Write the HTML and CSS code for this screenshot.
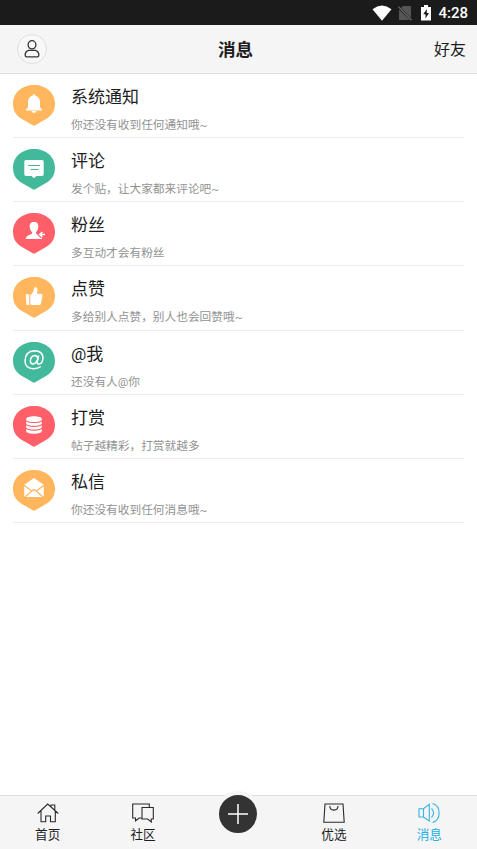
FILE: index.html
```html
<!DOCTYPE html>
<html lang="zh-CN">
<head>
<meta charset="utf-8">
<title>消息</title>
<link rel="stylesheet" href="styles.css">
</head>
<body>
<svg class="defs" width="0" height="0"><defs>
<path id="pin" d="M21 0C33 0 42 8 42 18.500C42 26 38.500 31 33 34L22.200 40.300Q21 41 19.800 40.300L9 34C3.500 31 0 26 0 18.500C0 8 9 0 21 0Z"/>
</defs></svg>
<div class="status">
  <svg width="20" height="16" viewBox="0 0 20 16"><path fill="#fff" d="M.5 4.200Q10-3.200 19.500 4.200L10 15.800Z"/></svg>
  <svg class="sim" width="14" height="16" viewBox="0 0 14 16"><path fill="#555" d="M5 1H13V13L3 2.800ZM1 4.500L12 15H1Z"/><path stroke="#666" stroke-width="1.300" d="M.5 1.800L13.500 15"/></svg>
  <svg class="battery" width="10" height="16" viewBox="0 0 10 16"><path fill="#fff" d="M3 0H7V2H10V15.500H0V2H3Z"/><path fill="#1b1b1b" d="M5.800 4L2.200 9.300H4.500V13.500L8 8H5.800Z"/></svg>
  <span class="clock">4:28</span>
</div>
<header class="header">
  <span class="avatar"><svg width="16" height="18" viewBox="0 0 16 18" fill="none" stroke="#333" stroke-width="1.300"><ellipse cx="8" cy="4.800" rx="3.900" ry="4.100"/><path d="M4.700 10.300H11.300Q14.700 11.200 14.900 15Q14.900 16.800 13.500 16.800H2.500Q1.100 16.800 1.100 15Q1.300 11.200 4.700 10.300Z"/></svg></span>
  <h1>消息</h1>
  <span class="friends">好友</span>
</header>
<main class="list">
  <section class="row"><svg class="pin orange" viewBox="0 0 42 41"><use href="#pin"/><path fill="#fff" d="M21 9.300Q22.300 9.300 22.400 10.800Q27 12 27 17V21.500Q27.200 23.500 29 24.300V25.500H13V24.300Q14.800 23.500 15 21.500V17Q15 12 19.600 10.800Q19.700 9.300 21 9.300ZM18.500 26H23.500Q23 28 21 28T18.500 26Z"/></svg><div class="text"><h2>系统通知</h2><p>你还没有收到任何通知哦~</p></div></section>
  <section class="row"><svg class="pin green" viewBox="0 0 42 41"><use href="#pin"/><path fill="#fff" d="M13 11H29Q30.700 11 30.700 12.700V25.300Q30.700 27 29 27H23.500L21 29.300L18.500 27H13Q11.300 27 11.300 25.300V12.700Q11.300 11 13 11Z"/><path class="cut" d="M15 16.500H27M17.500 20.500H25.500"/></svg><div class="text"><h2>评论</h2><p>发个贴，让大家都来评论吧~</p></div></section>
  <section class="row"><svg class="pin red" viewBox="0 0 42 41"><use href="#pin"/><path fill="#fff" d="M21 9C24.300 9 25.600 11 25.300 14.500Q24.800 18 23 19.300V20.800L26 22Q28.500 23 29.300 26H12.500Q13 23 16 22L19 20.800V19.300Q17.200 18 16.700 14.500C16.400 11 17.700 9 21 9Z"/><path class="edge" d="M31 21.500H27M29.200 19L26.700 21.500L29.200 24" fill="none" stroke-width="3.600"/><path d="M32 21.500H27M29.400 19L26.900 21.500L29.400 24" fill="none" stroke="#fff" stroke-width="1.700"/></svg><div class="text"><h2>粉丝</h2><p>多互动才会有粉丝</p></div></section>
  <section class="row"><svg class="pin orange" viewBox="0 0 42 41"><use href="#pin"/><path fill="#fff" d="M12.700 17.200H16.300V28H13.400ZM17.300 18.300Q20.300 16.300 21 11.500Q21 10 22.500 10Q24.800 10.500 24.500 13.500L24 16.800H28Q29.800 17 29.500 19L28 26.500Q27.700 28 26 28H18.500L17.300 27Z"/></svg><div class="text"><h2>点赞</h2><p>多给别人点赞，别人也会回赞哦~</p></div></section>
  <section class="row"><svg class="pin green" viewBox="0 0 42 41"><use href="#pin"/><g fill="none" stroke="#fff" stroke-width="1.500"><path d="M27.800 24.500Q24.500 27 20.300 26.800Q12 26.300 12 18.800Q12.500 9 21.500 8.800Q29.700 9 30 16Q29.600 21.600 26 22.100Q23.700 22.100 24.200 19.700L25.600 13.500"/><path d="M24.900 16.900Q24.400 13.500 21.500 13.500Q17.800 14.100 17.300 18.800Q17.300 22 20 22Q23.200 21.500 24.900 16.900Z"/></g></svg><div class="text"><h2>@我</h2><p>还没有人@你</p></div></section>
  <section class="row"><svg class="pin red" viewBox="0 0 42 41"><use href="#pin"/><path fill="#fff" d="M13.200 13C13.200 9.300 28.800 9.300 28.800 13V25C28.800 28.700 13.200 28.700 13.200 25Z"/><path class="edge" fill="none" stroke-width="1.100" d="M13 14.500C14.500 17.200 27.500 17.200 29 14.500M13 18.300C14.500 21 27.500 21 29 18.300M13 22.100C14.500 24.800 27.500 24.800 29 22.100"/></svg><div class="text"><h2>打赏</h2><p>帖子越精彩，打赏就越多</p></div></section>
  <section class="row"><svg class="pin orange" viewBox="0 0 42 41"><use href="#pin"/><path fill="#fff" d="M11.200 14.800L21 8L30.800 14.800V25.500Q30.800 27 29.300 27H12.700Q11.200 27 11.200 25.500Z"/><path class="edge" fill="none" stroke-width="1.200" d="M11 15.200L18.700 21L12 27M31 15.200L23.300 21L30 27M18.300 21.200Q21 18.800 23.700 21.200"/></svg><div class="text"><h2>私信</h2><p>你还没有收到任何消息哦~</p></div></section>
</main>
<nav class="tabs">
  <div class="tab"><svg width="22" height="20" viewBox="0 0 22 20"><path d="M.7 10.500L10.700 1L21.300 10.500M4 8V18.800H8.700V13H13.500V18.800H18.300V8M14 3.500V2H17.800V6.700"/></svg><span>首页</span></div>
  <div class="tab"><svg width="22" height="20" viewBox="0 0 22 20"><path d="M9.500 15H7.200L3.500 17.800V15H.7V1H17.300V4M10 4.500H21.300V16H19.300V19L15.700 16H10Z"/></svg><span>社区</span></div>
  <div class="tab center"><span class="add"><svg width="20" height="20" viewBox="0 0 20 20"><path d="M0 10H20M10 0V20"/></svg></span></div>
  <div class="tab"><svg width="22" height="20" viewBox="0 0 22 20"><path d="M2 1H20L21.200 19.200H.8ZM6.800 3C7 8.500 14.800 8.500 15 3"/></svg><span>优选</span></div>
  <div class="tab active"><svg width="22" height="20" viewBox="0 0 22 20"><path d="M1 5.800H5.500L11.300 1.300V18L5.500 14H1ZM5.500 5.800V14M13.500 5.500Q17.800 10 13.500 14.500M14.500 .5C23.300 3 23.300 17 14.500 19.500"/></svg><span>消息</span></div>
</nav>
</body>
</html>
```
FILE: styles.css
```css
* { box-sizing: border-box; }
body {
  margin: 0;
  height: 849px;
  display: flex;
  flex-direction: column;
  overflow: hidden;
  background: #fff;
  color: #1c1c1c;
  font-family: Roboto, "Noto Sans CJK SC", sans-serif;
}
h1, h2, p { margin: 0; font-weight: 400; }
svg { display: block; flex: none; }
.defs { position: absolute; }
.status {
  height: 25px;
  flex: none;
  display: flex;
  align-items: center;
  justify-content: flex-end;
  padding-right: 9px;
  background: #1b1b1b;
}
.sim { margin-left: 6px; }
.battery { margin-left: 9px; }
.clock {
  margin-left: 7px;
  color: #fff;
  font: 500 15px/25px Roboto, sans-serif;
  padding-top: 2px;
}
.header {
  height: 49px;
  flex: none;
  display: grid;
  grid-template-columns: 1fr auto 1fr;
  align-items: center;
  padding: 0 11px 0 17px;
  background: #f5f5f5;
  border-bottom: 1px solid #dedede;
}
.avatar {
  width: 30px;
  height: 30px;
  display: flex;
  align-items: center;
  justify-content: center;
  border: 1px solid #dedede;
  border-radius: 50%;
  background: #f8f8f8;
}
.header h1 { padding-top: 2px; font-size: 17.6px; line-height: 26px; font-weight: 700; margin-right: 12px; }
.friends { justify-self: end; padding-top: 2px; font-size: 16px; line-height: 24px; }
.list { flex: 1; padding: 0 13px; }
.row {
  height: 64.15px;
  display: flex;
  align-items: flex-start;
  padding-top: 11px;
  border-bottom: 1px solid #ebebeb;
}
.pin { width: 42px; height: 41px; }
.orange { fill: #ffb65c; stroke: none; --tone: #ffb65c; }
.green { fill: #43b99b; --tone: #43b99b; }
.red { fill: #ff5f69; --tone: #ff5f69; }
.cut { stroke: var(--tone); stroke-width: 1.2; }
.edge { stroke: var(--tone); }
.text { margin-left: 16px; padding-top: 1px; }
.text h2 { height: 24px; font-size: 17px; line-height: 22px; }
.text p { margin-top: 6px; font-size: 11.7px; line-height: 18px; color: #929292; }
.tabs {
  height: 54px;
  flex: none;
  display: grid;
  grid-template-columns: repeat(5, 1fr);
  background: #f5f5f5;
  border-top: 1px solid #dedede;
}
.tab {
  display: flex;
  flex-direction: column;
  align-items: center;
  padding-top: 7px;
  font-size: 12.6px;
  line-height: 18px;
}
.tab svg { fill: none; stroke: #2a2a2a; stroke-width: 1.1; }
.tab span { margin-top: 3px; }
.tab.active { color: #20b0e3; }
.tab.active svg { stroke: #35b5e3; }
.tab.center { padding: 0; }
.tab .add {
  width: 46px;
  height: 46px;
  margin-top: -5px;
  display: flex;
  align-items: center;
  justify-content: center;
  border: 4px solid #f5f5f5;
  border-radius: 50%;
  background: #333;
}
.tab .add svg { stroke: #fff; stroke-width: 1.5; }
```
